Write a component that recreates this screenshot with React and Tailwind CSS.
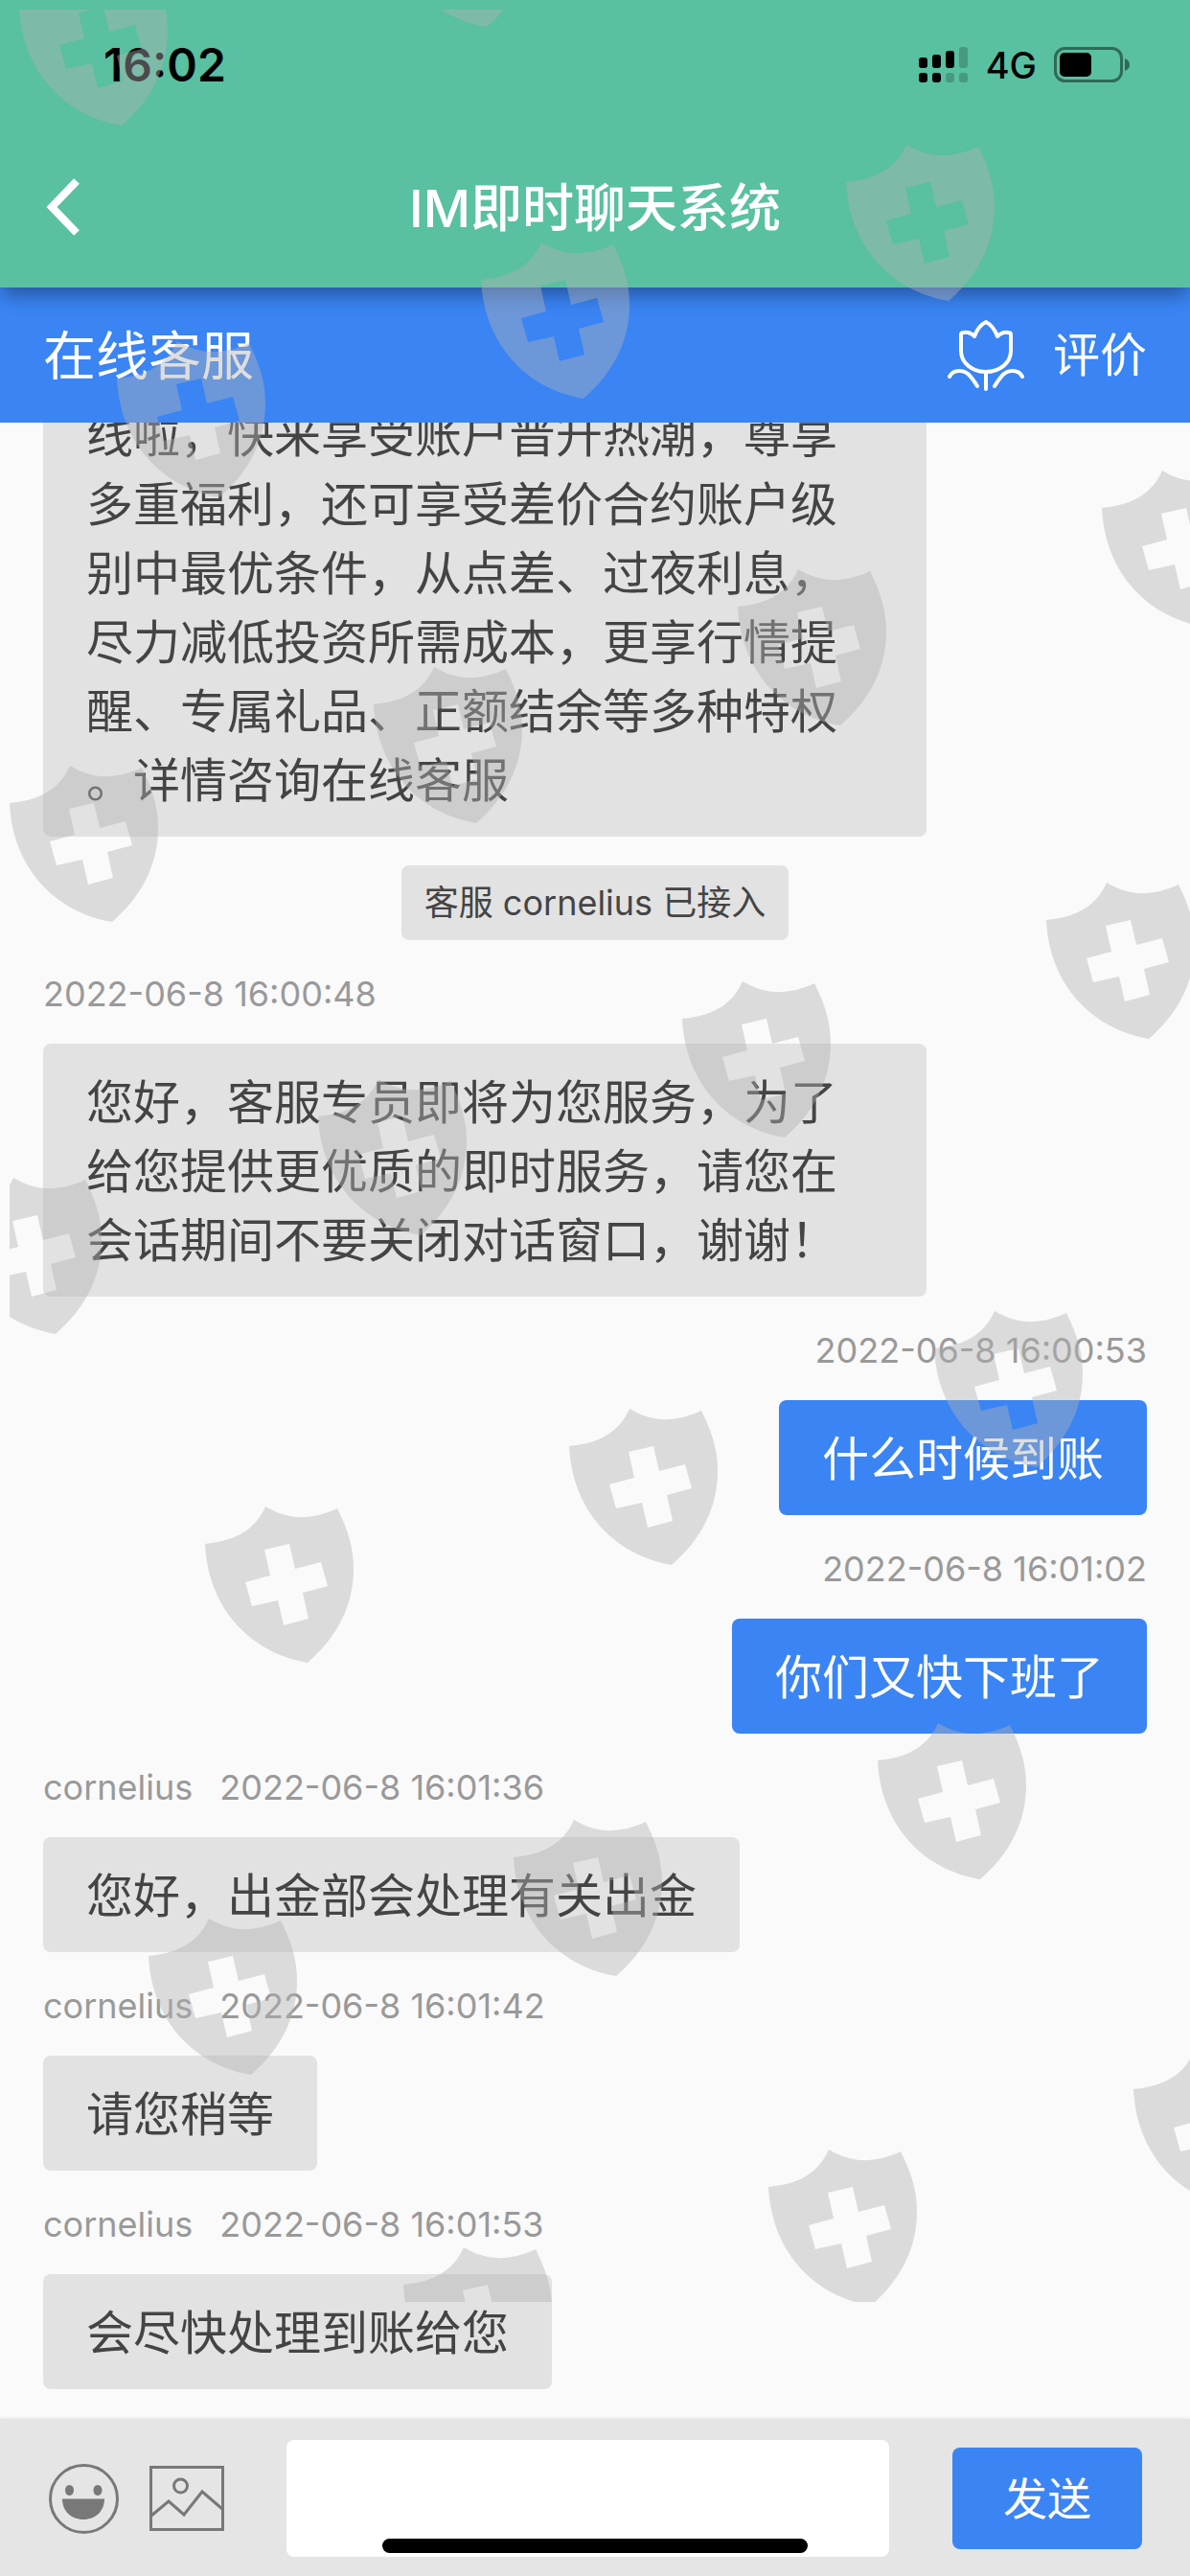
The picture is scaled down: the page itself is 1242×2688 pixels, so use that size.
import React from 'react';

const messages = [
    {
        id: 1,
        type: 'agent',
        text: '线啦，快来享受账户晋升热潮，尊享\n多重福利，还可享受差价合约账户级\n别中最优条件，从点差、过夜利息，\n尽力减低投资所需成本，更享行情提\n醒、专属礼品、正额结余等多种特权\n。详情咨询在线客服',
    },
    { id: 2, type: 'notice', text: '客服 cornelius 已接入' },
    {
        id: 3,
        type: 'agent',
        time: '2022-06-8 16:00:48',
        text: '您好，客服专员即将为您服务，为了\n给您提供更优质的即时服务，请您在\n会话期间不要关闭对话窗口，谢谢！',
    },
    { id: 4, type: 'user', time: '2022-06-8 16:00:53', text: '什么时候到账' },
    { id: 5, type: 'user', time: '2022-06-8 16:01:02', text: '你们又快下班了' },
    { id: 6, type: 'agent', name: 'cornelius', time: '2022-06-8 16:01:36', text: '您好，出金部会处理有关出金' },
    { id: 7, type: 'agent', name: 'cornelius', time: '2022-06-8 16:01:42', text: '请您稍等' },
    { id: 8, type: 'agent', name: 'cornelius', time: '2022-06-8 16:01:53', text: '会尽快处理到账给您' },
];

// top left corner of every shield
const shields = [
    [20, -32], [401, -135],
    [122, 356], [502, 253], [883, 151],
    [10, 799], [390, 696], [770, 594], [1150, 491],
    [-49, 1229], [332, 1126], [712, 1024], [1092, 921],
    [214, 1572], [594, 1470], [975, 1368],
    [155, 2002], [536, 1899], [916, 1798],
    [421, 2345], [802, 2243], [1183, 2141],
];

const Watermark = () => (
    <div className="pointer-events-none absolute top-[10px] right-0 left-[10px] z-20 h-[2392px] overflow-hidden">
        <svg className="h-full w-full text-[#b2b2b2] opacity-[0.42]" fill="currentColor" aria-hidden="true">
            {shields.map(([x, y]) => (
                <path
                    key={`${x}-${y}`}
                    transform={`translate(${x - 10} ${y - 10})`}
                    fillRule="evenodd"
                    d="M0 39C31 36 52 25 63 0C86 14 110 15 138 2C150 26 155 44 155 65C155 103 138 136 107 163C47 153 3 106 0 39ZM62 45L88 39L94 65L121 58L128 83L102 90L108 117L82 124L76 98L49 104L42 79L68 72Z"
                />
            ))}
        </svg>
    </div>
);

const StatusBar = () => (
    <div className="flex h-[132px] items-center justify-between pt-1 pr-[62px] pl-[108px] font-['Inter',sans-serif] text-black">
        <span className="text-[48px] leading-[60px] font-semibold">16:02</span>
        <div className="flex items-center">
            <svg width="52" height="38" viewBox="0 0 52 38" aria-hidden="true">
                <rect x="0" y="11" width="9" height="11" rx="3" />
                <rect x="14" y="8" width="9" height="14" rx="3" />
                <rect x="28" y="4" width="9" height="18" rx="3" />
                <rect x="42" y="0" width="9" height="22" rx="3" opacity="0.2" />
                <rect x="0" y="27" width="9" height="10" rx="3" />
                <rect x="14" y="27" width="9" height="10" rx="3" />
                <rect x="28" y="27" width="9" height="10" rx="3" opacity="0.2" />
                <rect x="42" y="27" width="9" height="10" rx="3" opacity="0.2" />
            </svg>
            <span className="mr-[18px] ml-[18px] text-[38px] leading-[48px] font-medium">4G</span>
            <svg width="80" height="38" viewBox="0 0 80 38" aria-hidden="true">
                <rect x="1.5" y="1.5" width="69" height="34" rx="10" fill="none" stroke="#000" strokeWidth="3" opacity="0.45" />
                <rect x="6" y="6" width="33" height="25" rx="5" />
                <path d="M74 12q5 2 5 6.5t-5 6.5z" opacity="0.45" />
            </svg>
        </div>
    </div>
);

const TitleBar = () => (
    <div className="relative flex h-[168px] items-center justify-center pt-1">
        <button type="button" aria-label="返回" className="absolute top-[53px] left-[47px]">
            <svg width="37" height="62" viewBox="0 0 37 62" fill="none" stroke="#fff" strokeWidth="8" aria-hidden="true">
                <path d="M33 4L7 31L33 58" />
            </svg>
        </button>
        <h1 className="text-[54px] leading-[72px] font-medium text-white">IM即时聊天系统</h1>
    </div>
);

const ServiceBar = () => (
    <div className="flex h-[141px] shrink-0 items-center justify-between bg-[#3a84f4] px-[45px] text-white">
        <h2 className="text-[55px] leading-[72px]">在线客服</h2>
        <button type="button" className="flex items-center gap-[30px] text-[49px] leading-[72px]">
            <svg
                width="80"
                height="74"
                viewBox="0 0 80 74"
                fill="none"
                stroke="currentColor"
                strokeWidth="4"
                strokeLinecap="round"
                strokeLinejoin="round"
                aria-hidden="true"
            >
                <path d="M14 15Q14 13 17 13Q23 12 28 17Q32 6 40 2Q48 6 52 17Q57 12 63 13Q66 13 66 15V32C66 45 54 54 40 54S14 45 14 32Z" />
                <path d="M40 54V72M2 59C6 51 18 51 24 59Q28 64 31 69M78 59C74 51 62 51 56 59Q52 64 49 69" />
            </svg>
            评价
        </button>
    </div>
);

const Message = ({ message }) => {
    if (message.type === 'notice') {
        return (
            <p className="mt-[30px] self-center rounded-lg bg-[#e2e2e2] px-[24px] text-[36px] leading-[78px] text-[#444]">
                {message.text}
            </p>
        );
    }

    const mine = message.type === 'user';

    return (
        <div className={`flex shrink-0 flex-col ${mine ? 'items-end' : 'items-start'}`}>
            {message.time && (
                <div className="flex gap-[28px] pt-[30px] pb-[26px] text-[36px] leading-[52px] text-[#999]">
                    {message.name && <span>{message.name}</span>}
                    <time>{message.time}</time>
                </div>
            )}
            <p
                className={`max-w-4/5 rounded-lg px-[45px] pt-[26px] pb-[22px] text-[49px] leading-[72px] whitespace-pre-line ${
                    mine ? 'bg-[#3a84f4] text-white' : 'bg-[#e2e2e2] text-[#444]'
                } ${message.text.includes('\n') ? 'w-4/5' : ''}`}
            >
                {message.text}
            </p>
        </div>
    );
};

const Composer = () => (
    <form className="relative flex shrink-0 items-center bg-[#e5e5e5] pt-[22px] pr-[50px] pb-[20px] pl-[51px] shadow-[0_0_4px_rgba(0,0,0,0.12)]">
        <button type="button" aria-label="表情">
            <svg width="73" height="73" viewBox="0 0 73 73" fill="#787878" aria-hidden="true">
                <circle cx="36.5" cy="36.5" r="35" fill="none" stroke="#787878" strokeWidth="3" />
                <ellipse cx="21.5" cy="27.5" rx="4.5" ry="5.5" />
                <ellipse cx="51" cy="27.5" rx="4.5" ry="5.5" />
                <path d="M14 36.5H58C58 49 49 58 36 58S14 49 14 36.5Z" />
            </svg>
        </button>
        <button type="button" aria-label="图片" className="ml-[32px]">
            <svg width="78" height="70" viewBox="0 0 78 70" fill="none" stroke="#787878" strokeWidth="3" aria-hidden="true">
                <rect x="1.5" y="2.5" width="75" height="65" />
                <circle cx="32.5" cy="22" r="7" />
                <path d="M2 53L20 38L36 52L55 28L76 46" />
            </svg>
        </button>
        <input
            type="text"
            aria-label="输入消息"
            className="ml-[65px] h-[122px] min-w-0 flex-1 rounded-lg bg-white px-6 text-[49px] text-[#444] outline-none"
        />
        <button type="button" className="ml-[66px] h-[106px] w-[198px] rounded-lg bg-[#3a84f4] text-[46px] text-white">
            发送
        </button>
        <div className="absolute bottom-[24px] left-1/2 h-[15px] w-[444px] -translate-x-1/2 rounded-full bg-black" />
    </form>
);

const App = () => {
    return (
        <div lang="zh-CN" className="relative flex h-screen flex-col overflow-hidden bg-[#fafafa] font-['Inter','Noto_Sans_CJK_SC',sans-serif]">
            <header className="relative z-10 shrink-0 bg-[#59c0a1] shadow-[0_10px_18px_-2px_rgba(0,0,0,0.35)]">
                <StatusBar />
                <TitleBar />
            </header>
            <ServiceBar />
            <main className="flex min-h-0 flex-1 flex-col justify-end overflow-hidden px-[45px] pb-[31px]">
                {messages.map((message) => (
                    <Message key={message.id} message={message} />
                ))}
            </main>
            <Composer />
            <Watermark />
        </div>
    );
};

export default App;
